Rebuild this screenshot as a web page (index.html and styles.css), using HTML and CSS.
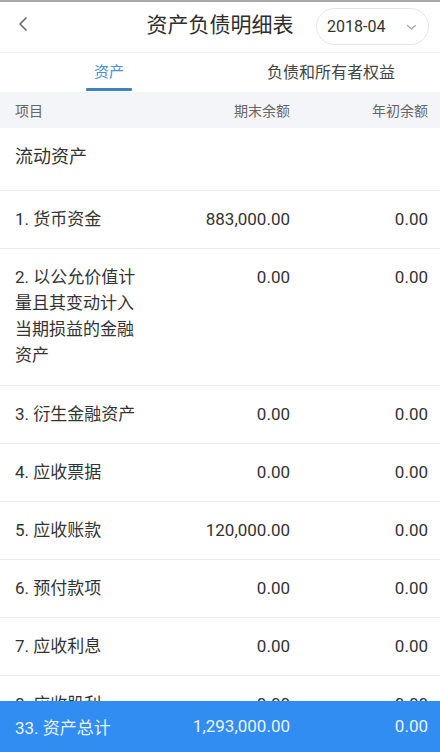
FILE: index.html
```html
<!DOCTYPE html>
<html lang="zh-CN">
<head>
<meta charset="utf-8">
<title>资产负债明细表</title>
<link rel="stylesheet" href="styles.css">
</head>
<body>
<div class="page">
  <header class="topbar">
    <span class="back">
      <svg width="12" height="16" viewBox="0 0 12 16"><polyline points="9,2 3,8 9,14" fill="none" stroke="#666" stroke-width="1.6" stroke-linecap="round" stroke-linejoin="round"/></svg>
    </span>
    <h1 class="title">资产负债明细表</h1>
    <div class="picker">
      <span class="picker-text">2018-04</span>
      <svg class="picker-arrow" width="11" height="7" viewBox="0 0 11 7"><polyline points="1.5,1.5 5.5,5 9.5,1.5" fill="none" stroke="#aaa" stroke-width="1.3" stroke-linecap="round" stroke-linejoin="round"/></svg>
    </div>
  </header>
  <nav class="tabs">
    <div class="tab active"><span class="tab-label">资产</span></div>
    <div class="tab"><span class="tab-label">负债和所有者权益</span></div>
  </nav>
  <div class="colhead grid">
    <span>项目</span>
    <span class="num">期末余额</span>
    <span class="num">年初余额</span>
  </div>
  <main class="list">
    <div class="section">流动资产</div>
    <div class="row grid"><span>1. 货币资金</span><span class="num">883,000.00</span><span class="num">0.00</span></div>
    <div class="row grid"><span>2. 以公允价值计量且其变动计入当期损益的金融资产</span><span class="num">0.00</span><span class="num">0.00</span></div>
    <div class="row grid"><span>3. 衍生金融资产</span><span class="num">0.00</span><span class="num">0.00</span></div>
    <div class="row grid"><span>4. 应收票据</span><span class="num">0.00</span><span class="num">0.00</span></div>
    <div class="row grid"><span>5. 应收账款</span><span class="num">120,000.00</span><span class="num">0.00</span></div>
    <div class="row grid"><span>6. 预付款项</span><span class="num">0.00</span><span class="num">0.00</span></div>
    <div class="row grid"><span>7. 应收利息</span><span class="num">0.00</span><span class="num">0.00</span></div>
    <div class="row grid"><span>8. 应收股利</span><span class="num">0.00</span><span class="num">0.00</span></div>
    <div class="row grid"><span>9. 其他应收款</span><span class="num">0.00</span><span class="num">0.00</span></div>
  </main>
  <footer class="total grid">
    <span>33. 资产总计</span>
    <span class="num">1,293,000.00</span>
    <span class="num">0.00</span>
  </footer>
</div>
</body>
</html>
```

FILE: styles.css
```css
* { box-sizing: border-box; }
html, body { margin: 0; padding: 0; }
body {
  font-family: Roboto, "Noto Sans CJK SC", sans-serif;
  color: #333;
  background: #fff;
}
.page {
  height: 752px;
  display: flex;
  flex-direction: column;
  overflow: hidden;
  border-top: 2px solid #a9a9a9;
}
.topbar {
  height: 51px;
  flex: none;
  display: flex;
  align-items: center;
  position: relative;
  border-bottom: 1px solid #f0f0f0;
}
.back {
  position: absolute;
  left: 17px;
  top: 14px;
  width: 12px;
  height: 16px;
  display: flex;
}
.title {
  margin: 0 auto;
  font-size: 21px;
  font-weight: 400;
  color: #2e2e2e;
  line-height: 28px;
  padding-bottom: 4px;
}
.picker {
  position: absolute;
  right: 11px;
  top: 6px;
  width: 113px;
  height: 37px;
  border: 1px solid #e6e6e6;
  border-radius: 19px;
  display: flex;
  align-items: center;
  padding-left: 10px;
}
.picker-text {
  font-size: 16px;
  color: #333;
}
.picker-arrow {
  margin-left: 21px;
  margin-top: 2px;
}
.tabs {
  flex: none;
  height: 39px;
  display: flex;
}
.tab {
  flex: 1;
  display: flex;
  justify-content: center;
  align-items: center;
  font-size: 16px;
  color: #444;
  position: relative;
  padding-bottom: 4px;
}
.tab:last-child { padding-left: 4px; }
.tab.active .tab-label { color: #4b8fd4; font-size: 15px; }
.tab.active::after {
  content: "";
  position: absolute;
  bottom: 1px;
  left: 50%;
  width: 46px;
  margin-left: -23px;
  height: 3px;
  background: #3f82c2;
  border-radius: 1px;
}
.grid {
  display: grid;
  grid-template-columns: 125px 150px 1fr;
  padding: 0 12px 0 15px;
}
.num { text-align: right; }
.colhead {
  flex: none;
  height: 36px;
  align-items: center;
  background: #f4f5f8;
  font-size: 14px;
  color: #666;
}
.list {
  flex: 1;
  overflow: hidden;
}
.section {
  font-size: 18px;
  line-height: 26px;
  padding: 16px 15px 20px;
  border-bottom: 1px solid #ececec;
}
.row {
  font-size: 17px;
  line-height: 26px;
  padding-top: 15px;
  padding-bottom: 16px;
  border-bottom: 1px solid #ececec;
  align-items: start;
}
.row:nth-child(3) { padding-bottom: 17px; }
.total {
  flex: none;
  height: 51px;
  align-items: center;
  background: #318df1;
  color: #eaf3ff;
  font-size: 17px;
  padding-bottom: 1px;
}
```
